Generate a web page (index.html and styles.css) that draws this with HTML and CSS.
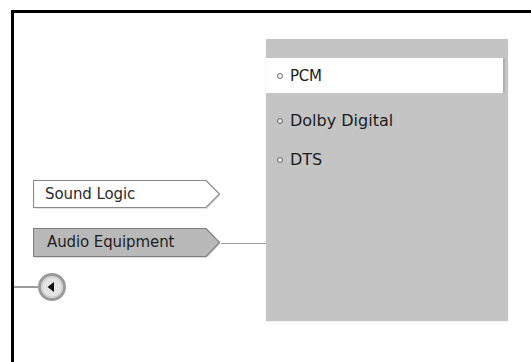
FILE: index.html
```html
<!DOCTYPE html>
<html>
<head>
<meta charset="utf-8">
<link rel="stylesheet" href="styles.css">
</head>
<body>
<div class="frame">
  <div class="left">
    <div class="btn-row">
      <div class="tag tag-light">
        <svg class="tag-shape" width="188" height="30" viewBox="0 0 188 30">
          <polygon points="1.5,2 174,2 187.5,15.5 174,29 1.5,29" fill="#d8d8d8" opacity="0.7"/>
          <polygon points="0.5,0.5 173,0.5 186.5,14 173,27.5 0.5,27.5" fill="#ffffff" stroke="#8a8a8a" stroke-width="1.2"/>
        </svg>
        <span class="tag-label">Sound Logic</span>
      </div>
    </div>
    <div class="btn-row btn-row-active">
      <div class="tag tag-dark">
        <svg class="tag-shape" width="188" height="31" viewBox="0 0 188 31">
          <polygon points="1.5,2 174,2 187.5,16 174,30 1.5,30" fill="#d0d0d0" opacity="0.7"/>
          <polygon points="0.5,0.5 173,0.5 186.5,14.5 173,28.5 0.5,28.5" fill="#b9b9b9" stroke="#7e7e7e" stroke-width="1.2"/>
        </svg>
        <span class="tag-label">Audio Equipment</span>
      </div>
      <div class="connector"></div>
    </div>
    <div class="back-row">
      <div class="back-line"></div>
      <div class="back-btn">
        <svg width="28" height="28" viewBox="0 0 28 28">
          <circle cx="14" cy="14" r="12.5" fill="#e4e4e4" stroke="#9a9a9a" stroke-width="3"/>
          <circle cx="14" cy="14" r="10" fill="none" stroke="#c8c8c8" stroke-width="1"/>
          <polygon points="9.5,14 16,9 16,19" fill="#111"/>
        </svg>
      </div>
    </div>
  </div>
  <div class="panel">
    <div class="panel-head"></div>
    <ul class="options">
      <li class="opt opt-selected"><span class="dot"></span>PCM</li>
      <li class="opt"><span class="dot"></span>Dolby Digital</li>
      <li class="opt"><span class="dot"></span>DTS</li>
    </ul>
  </div>
</div>
</body>
</html>
```
FILE: styles.css
```css
html {
  margin: 0;
  padding: 0;
  background: #ffffff;
  overflow: hidden;
}
body {
  margin: 0;
  padding: 10px 0 0 11px;
  font-family: "DejaVu Sans", Verdana, sans-serif;
}
.frame {
  width: 520px;
  height: 352px;
  border-top: 3px solid #000;
  border-left: 3px solid #000;
  display: flex;
  align-items: flex-start;
  box-sizing: border-box;
}
.left {
  width: 252px;
  padding-top: 167px;
  display: flex;
  flex-direction: column;
}
.btn-row {
  display: flex;
  align-items: flex-start;
  padding-left: 19px;
  height: 28px;
}
.btn-row-active {
  margin-top: 20px;
  height: 29px;
}
.tag {
  display: grid;
  width: 188px;
}
.tag-shape,
.tag-label {
  grid-area: 1 / 1;
}
.tag-shape {
  display: block;
}
.tag-label {
  align-self: start;
  height: 28px;
  line-height: 28px;
  padding-left: 12px;
  font-size: 15px;
  letter-spacing: -0.1px;
  color: #2a2a2a;
}
.tag-dark .tag-label {
  padding-left: 14px;
  color: #1e1e1e;
}
.connector {
  flex: 1;
  height: 1px;
  background: #9a9a9a;
  margin-top: 15px;
}
.back-row {
  margin-top: 16px;
  display: flex;
  align-items: center;
  height: 28px;
}
.back-line {
  width: 24px;
  height: 2px;
  background: #9c9c9c;
}
.back-btn svg {
  display: block;
}
.panel {
  margin-top: 26px;
  width: 242px;
  height: 282px;
  background: #c4c4c4;
  box-shadow: 0 1px 2px rgba(0,0,0,0.08);
}
.panel-head {
  height: 19px;
}
.options {
  list-style: none;
  margin: 0;
  padding: 0;
}
.opt {
  display: flex;
  align-items: center;
  height: 39px;
  padding-left: 11px;
  font-size: 16px;
  color: #1c1c1c;
}
.opt-selected {
  height: 35px;
  margin-bottom: 8px;
  margin-right: 3px;
  background: #ffffff;
  border-right: 2px solid #b0b0b0;
  font-size: 15px;
  letter-spacing: -0.3px;
}
.dot {
  width: 4px;
  height: 4px;
  border: 1px solid #6a6a6a;
  border-radius: 50%;
  background: #e6e6e6;
  margin-right: 7px;
}
.opt-selected .dot {
  background: #fff;
}
```
